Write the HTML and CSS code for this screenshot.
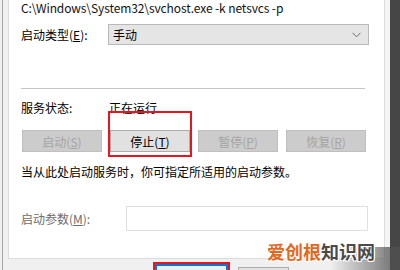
FILE: index.html
```html
<!DOCTYPE html>
<html lang="zh-CN">
<head>
<meta charset="utf-8">
<link rel="stylesheet" href="styles.css">
</head>
<body>
<div class="frame">
  <div class="edge-left"></div>
  <div class="main">
    <div class="panel">
      <div class="path">C:\Windows\System32\svchost.exe -k netsvcs -p</div>
      <div class="row type-row">
        <div class="label w87">启动类型(<u>E</u>):</div>
        <div class="select">
          <span>手动</span>
          <svg class="chev" width="9" height="6" viewBox="0 0 9 6"><path d="M0.5 0.8 L4.5 4.8 L8.5 0.8" fill="none" stroke="#6a6a6a" stroke-width="1"/></svg>
        </div>
      </div>
      <div class="sep"></div>
      <div class="row status-row">
        <div class="label w88">服务状态:</div>
        <div class="value">正在运行</div>
      </div>
      <div class="buttons">
        <div class="btn disabled">启动(<u>S</u>)</div>
        <div class="btn">停止(<u>T</u>)</div>
        <div class="btn disabled">暂停(<u>P</u>)</div>
        <div class="btn disabled">恢复(<u>R</u>)</div>
      </div>
      <div class="hint">当从此处启动服务时，你可指定所适用的启动参数。</div>
      <div class="row param-row">
        <div class="label w105 gray">启动参数(<u>M</u>):</div>
        <div class="input"></div>
      </div>
    </div>
    <div class="footer">
      <div class="fbtn primary"></div>
      <div class="fbtn"></div>
    </div>
  </div>
  <div class="edge-right"><div class="dark"></div></div>
</div>
<div class="hl hl-stop"></div>
<div class="hl hl-ok"></div>
<div class="wm-bg"></div>
<div class="watermark"><span class="orange">爱创根</span><span class="dgray">知识网</span></div>
</body>
</html>
```
FILE: styles.css
```css
html, body {
  margin: 0;
  padding: 0;
}
body {
  width: 400px;
  height: 270px;
  overflow: hidden;
  background: #f0f0f0;
  font-family: "Noto Sans CJK SC", "Noto Sans", sans-serif;
  font-size: 12px;
  color: #000;
  position: relative;
}
u { text-decoration: underline; text-underline-offset: 1px; }
.frame {
  display: flex;
  height: 270px;
  overflow: hidden;
}
.edge-left {
  width: 6px;
  margin-left: 2px;
  border-left: 1px solid #a6a6a6;
  box-sizing: border-box;
  flex-shrink: 0;
}
.main {
  width: 377px;
  flex-shrink: 0;
  display: flex;
  flex-direction: column;
  overflow: hidden;
}
.panel {
  background: #fff;
  height: 259px;
  flex-shrink: 0;
  box-sizing: border-box;
  border: 1px solid #dcdcdc;
  border-top: none;
  padding-left: 12px;
  padding-top: 1px;
}
.path {
  line-height: 13px;
  height: 13px;
  font-size: 12px;
  color: #111;
  letter-spacing: -0.1px;
}
.row {
  display: flex;
  align-items: center;
}
.label { line-height: 16px; }
.w87 { width: 87px; }
.w88 { width: 88px; }
.w105 { width: 105px; }
.gray { color: #6d6d6d; }
.type-row { margin-top: 10px; }
.select {
  width: 261px;
  height: 21px;
  box-sizing: border-box;
  background: #e5e5e5;
  border: 1px solid #b9b9b9;
  display: flex;
  align-items: center;
  justify-content: space-between;
  padding: 0 7px 0 4px;
}
.chev { margin-top: 1px; }
.sep {
  margin-top: 43px;
  width: 344px;
  height: 1px;
  background: #c4c4c4;
}
.status-row { margin-top: 10px; }
.buttons {
  margin-top: 14px;
  margin-left: 1px;
  display: flex;
  gap: 8px;
}
.btn {
  width: 80px;
  height: 22px;
  box-sizing: border-box;
  border: 1px solid #adadad;
  background: #e1e1e1;
  display: flex;
  align-items: center;
  justify-content: center;
  color: #000;
}
.btn.disabled {
  background: #cccccc;
  border-color: #bfbfbf;
  color: #a4a4a4;
}
.hint {
  margin-top: 12px;
  line-height: 16px;
}
.param-row { margin-top: 26px; }
.input {
  width: 242px;
  height: 25px;
  box-sizing: border-box;
  border: 1px solid #e0e0e0;
  background: #fff;
}
.footer {
  display: flex;
  align-items: flex-start;
  padding-left: 147px;
  padding-top: 5px;
  gap: 10px;
  flex-shrink: 0;
}
.fbtn {
  width: 51px;
  height: 20px;
  margin-top: 3px;
  box-sizing: border-box;
  border: 1px solid #adadad;
  background: #e1e1e1;
  flex-shrink: 0;
}
.fbtn.primary {
  width: 73px;
  margin-top: 0;
  border: 2px solid #0078d7;
  background: #e5f1fb;
}
.edge-right {
  flex: 1;
  display: flex;
  justify-content: flex-end;
  background: #f4f4f4;
}
.dark {
  width: 10px;
  background: #464646;
}
.hl {
  position: absolute;
  box-sizing: border-box;
  border: 2px solid #e8141e;
}
.hl-stop {
  left: 108px;
  top: 111px;
  width: 84px;
  height: 46px;
}
.hl-ok {
  left: 153px;
  top: 262px;
  width: 77px;
  height: 20px;
}
.wm-bg {
  position: absolute;
  left: 330px;
  top: 247px;
  width: 70px;
  height: 23px;
  background: linear-gradient(to right, rgba(90,90,90,0), rgba(80,80,80,0.85));
}
.watermark {
  position: absolute;
  left: 267px;
  top: 240px;
  font-size: 18px;
  line-height: 22px;
  font-weight: 700;
  letter-spacing: 0;
  text-shadow: 1px 1px 0 #fff, -1px -1px 0 #fff, 1px -1px 0 #fff, -1px 1px 0 #fff;
}
.orange { color: #e3681f; }
.dgray { color: #4a4a4a; }
```
